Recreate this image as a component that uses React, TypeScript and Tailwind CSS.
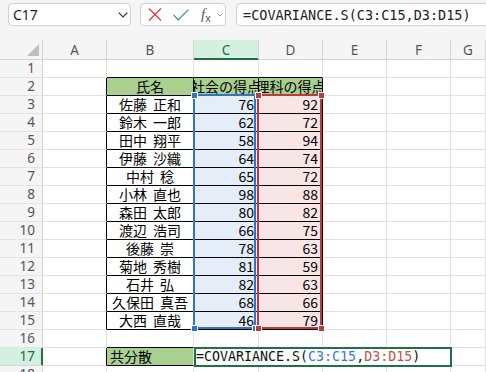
import React from "react";

const names = [
  "佐藤 正和",
  "鈴木 一郎",
  "田中 翔平",
  "伊藤 沙織",
  "中村 稔",
  "小林 直也",
  "森田 太郎",
  "渡辺 浩司",
  "後藤 崇",
  "菊地 秀樹",
  "石井 弘",
  "久保田 真吾",
  "大西 直哉",
];
const cVals = [76, 62, 58, 64, 65, 98, 80, 66, 78, 81, 82, 68, 46];
const dVals = [92, 72, 94, 74, 72, 88, 82, 75, 63, 59, 63, 66, 79];

const JP = "font-['Noto_Sans_CJK_JP',sans-serif]";
const UI = "font-['Noto_Sans',sans-serif]";
const MONO = "font-['DejaVu_Sans_Mono',monospace]";

const GRID_R = "border-r-[#e1e1e1]";
const GRID_B = "border-b-[#e1e1e1]";

function Cell({
  w,
  rBlack,
  bBlack,
  className = "",
  children,
}: {
  w: string;
  rBlack?: boolean;
  bBlack?: boolean;
  className?: string;
  children?: React.ReactNode;
}) {
  return (
    <div
      className={`${w} h-[18px] shrink-0 border-r border-b flex items-center overflow-hidden whitespace-nowrap leading-[15px] ${
        rBlack ? "border-r-black" : GRID_R
      } ${bBlack ? "border-b-black" : GRID_B} ${className}`}
    >
      {children}
    </div>
  );
}

function GridRow({ n }: { n: number }) {
  const inTable = n >= 2 && n <= 15;
  const data = n >= 3 && n <= 15 ? n - 3 : -1;
  const active = n === 17;
  return (
    <div className="flex h-[18px]">
      <div
        className={`w-[43px] h-[18px] shrink-0 border-r border-b flex items-center justify-end pr-[7px] text-[13.5px] leading-[15px] ${UI} ${
          active
            ? "bg-[#d3f0e0] text-[#1e6b41] border-r-[#1e7145] border-b-[#d6d6d6] shadow-[inset_-1px_0_0_#1e7145]"
            : "bg-[#f5f5f5] text-[#555] border-r-[#d6d6d6] border-b-[#e3e3e3]"
        }`}
      >
        {n}
      </div>
      {/* A */}
      <Cell w="w-[64px]" rBlack={inTable || n === 17} />
      {/* B */}
      <Cell
        w="w-[87px]"
        rBlack={inTable}
        bBlack={n <= 17}
        className={`${JP} text-[14px] text-black ${
          n === 2 || n === 17 ? "bg-[#a9d08e]" : ""
        } ${n === 17 ? "justify-start pl-[3px]" : "justify-center"} [word-spacing:3px]`}
      >
        {n === 2 ? "氏名" : n === 17 ? "共分散" : data >= 0 ? names[data] : null}
      </Cell>
      {/* C */}
      <Cell
        w="w-[65px]"
        rBlack={inTable}
        bBlack={n <= 15}
        className={`${JP} text-[14px] text-black ${
          n === 2 ? "bg-[#a9d08e] justify-center" : data >= 0 ? "bg-[#e4edf8] justify-end pr-[4px]" : ""
        }`}
      >
        {n === 2 ? "社会の得点" : data >= 0 ? cVals[data] : null}
      </Cell>
      {/* D */}
      <Cell
        w="w-[64px]"
        rBlack={inTable}
        bBlack={n <= 15}
        className={`${JP} text-[14px] text-black ${
          n === 2 ? "bg-[#a9d08e] justify-center" : data >= 0 ? "bg-[#f8e6e7] justify-end pr-[4px]" : ""
        }`}
      >
        {n === 2 ? "理科の得点" : data >= 0 ? dVals[data] : null}
      </Cell>
      <Cell w="w-[64px]" />
      <Cell w="w-[64px]" />
      <Cell w="flex-1" />
    </div>
  );
}

function Handle({ color, pos }: { color: string; pos: string }) {
  return <div className={`absolute w-[7px] h-[7px] border border-white ${color} ${pos}`} />;
}

export default function App() {
  const rows = Array.from({ length: 18 }, (_, i) => i + 1);
  const letters = ["A", "B", "C", "D", "E", "F", "G"];
  const widths = ["w-[64px]", "w-[87px]", "w-[65px]", "w-[64px]", "w-[64px]", "w-[64px]", "flex-1"];
  return (
    <div className="relative w-[486px] h-[372px] overflow-hidden bg-white">
      {/* Formula bar */}
      <div className="h-[40px] bg-[#f5f5f5] flex items-start pt-[3px] pl-[8px] gap-[9px]">
        <div className="w-[123px] h-[23px] shrink-0 rounded-[4px] border border-[#d1d1d1] bg-white flex items-center">
          <span className={`${UI} text-[14px] leading-[16px] text-[#1f1f1f] pl-[4px]`}>C17</span>
          <svg className="ml-auto mr-[2px]" width="10" height="6" viewBox="0 0 10 6">
            <path d="M0.7 0.7 L5 5 L9.3 0.7" fill="none" stroke="#333" strokeWidth="1.2" />
          </svg>
        </div>
        <div className="w-[86px] h-[23px] shrink-0 rounded-[4px] border border-[#d1d1d1] bg-white flex items-center">
          <svg className="ml-[7px]" width="14" height="13" viewBox="0 0 14 13">
            <path d="M1 0.5 L13 12.5 M13 0.5 L1 12.5" stroke="#e0383e" strokeWidth="1.2" fill="none" />
          </svg>
          <svg className="ml-[11px]" width="16" height="12" viewBox="0 0 16 12">
            <path d="M0.6 5.8 L5.2 10.8 L15.4 0.6" stroke="#2f9a48" strokeWidth="1.2" fill="none" />
          </svg>
          <span className="ml-[12px] font-['Liberation_Serif',serif] italic text-[15px] text-[#555] leading-none">
            f<span className="text-[11px] not-italic font-['Liberation_Sans',sans-serif] relative top-[3px]">x</span>
          </span>
          <svg className="ml-[6px]" width="6" height="4" viewBox="0 0 6 4">
            <path d="M0.5 0.5 L3 3 L5.5 0.5" stroke="#aaa" strokeWidth="1" fill="none" />
          </svg>
        </div>
        <div className="w-[300px] h-[23px] shrink-0 ml-[1px] rounded-[4px] border border-[#d1d1d1] bg-white flex items-center pl-[6px]">
          <span className={`${MONO} text-[13.5px] leading-[16px] text-[#222]`}>=COVARIANCE.S(C3:C15,D3:D15)</span>
        </div>
      </div>

      {/* Column header */}
      <div className={`flex h-[20px] ${UI} text-[13.5px] leading-[16px]`}>
        <div className="w-[43px] h-[20px] shrink-0 bg-[#f5f5f5] border-r border-b border-r-[#d6d6d6] border-b-[#d6d6d6] flex items-end justify-end pr-[3px] pb-[3px]">
          <svg width="12" height="12" viewBox="0 0 12 12">
            <polygon points="12,0 12,12 0,12" fill="#bfbfbf" />
          </svg>
        </div>
        {letters.map((l, i) => (
          <div
            key={l}
            className={`${widths[i]} h-[20px] shrink-0 border-r border-b flex items-center justify-center ${
              l === "C"
                ? "bg-[#d3f0e0] text-[#1e6b41] border-r-[#d6d6d6] border-b-[#1e7145] shadow-[inset_0_-1px_0_#1e7145]"
                : "bg-[#f5f5f5] text-[#555] border-r-[#d6d6d6] border-b-[#d6d6d6]"
            }`}
          >
            {l}
          </div>
        ))}
      </div>

      {/* Rows */}
      <div>
        {rows.map((n) => (
          <GridRow key={n} n={n} />
        ))}
      </div>

      {/* Range highlights */}
      <div className="absolute left-[193px] top-[94px] w-[63px] h-[235px] border-2 border-[#2f75c6]" />
      <div className="absolute left-[257px] top-[94px] w-[65px] h-[235px] border-2 border-[#c0393b]" />
      <Handle color="bg-[#2f75c6]" pos="left-[191px] top-[92px]" />
      <Handle color="bg-[#2f75c6]" pos="left-[191px] top-[325px]" />
      <Handle color="bg-[#2f75c6]" pos="left-[252px] top-[325px]" />
      <Handle color="bg-[#c0393b]" pos="left-[255px] top-[92px]" />
      <Handle color="bg-[#c0393b]" pos="left-[318px] top-[92px]" />
      <Handle color="bg-[#c0393b]" pos="left-[255px] top-[325px]" />
      <Handle color="bg-[#c0393b]" pos="left-[318px] top-[325px]" />

      {/* Active editing cell */}
      <div className="absolute left-[194px] top-[347px] w-[258px] h-[20px] border-2 border-[#1e7145] bg-white flex items-center">
        <span className={`${MONO} text-[13.3px] text-[#111] leading-none`}>
          =COVARIANCE.S(<span className="text-[#3a78d0]">C3:C15</span>,
          <span className="text-[#c0504d]">D3:D15</span>)
        </span>
      </div>
    </div>
  );
}
